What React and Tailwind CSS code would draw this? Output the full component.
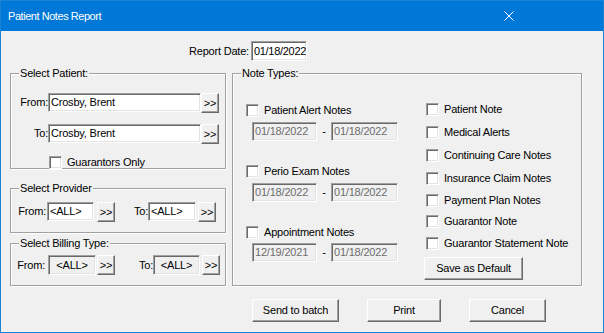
import React from "react";

// classic win32 bevels
const sunken =
  "border border-t-[#a0a0a0] border-l-[#a0a0a0] border-b-white border-r-white shadow-[inset_1px_1px_0_#696969,inset_-1px_-1px_0_#e3e3e3]";
const raised =
  "border border-t-white border-l-white border-b-[#696969] border-r-[#696969] shadow-[inset_-1px_-1px_0_#a0a0a0] bg-[#f0f0f0]";

const Btn = ({ className = "", children }) => (
  <div className={`flex items-center justify-center shrink-0 ${raised} ${className}`}>{children}</div>
);

const Field = ({ className = "", children }) => (
  <div className={`flex items-center shrink-0 overflow-hidden whitespace-nowrap ${sunken} ${className}`}>{children}</div>
);

const Check = ({ label }) => (
  <div className="flex items-center h-[13px]">
    <div className={`w-[13px] h-[13px] bg-white shrink-0 ${sunken}`} />
    <span className="ml-[5px] whitespace-nowrap">{label}</span>
  </div>
);

const Group = ({ label, className = "", children }) => (
  <div className={`relative border border-[#a0a0a0] shadow-[inset_1px_1px_0_#fff,1px_1px_0_#fff] ${className}`}>
    <span className="absolute left-[8px] top-[-7px] px-[1px] bg-[#f0f0f0] leading-[13px] whitespace-nowrap">{label}</span>
    {children}
  </div>
);

const DateRow = ({ from, to, className = "" }) => (
  <div className={`flex items-center ml-[6px] ${className}`}>
    <Field className="w-[65px] h-[19px] pl-[2px] bg-[#f0f0f0] text-[#6d6d6d]">{from}</Field>
    <span className="w-[14px] text-center">-</span>
    <Field className="w-[67px] h-[19px] pl-[2px] bg-[#f0f0f0] text-[#6d6d6d]">{to}</Field>
  </div>
);

export default function App() {
  const rightNotes = [
    ["Patient Note", "mt-0"],
    ["Medical Alerts", "mt-[10px]"],
    ["Continuing Care Notes", "mt-[10px]"],
    ["Insurance Claim Notes", "mt-[10px]"],
    ["Payment Plan Notes", "mt-[9px]"],
    ["Guarantor Note", "mt-[8px]"],
    ["Guarantor Statement Note", "mt-[9px]"],
  ];

  return (
    <div className="w-[604px] h-[333px] border border-[#1883d7] bg-[#f0f0f0] flex flex-col font-['Liberation_Sans',Arial,sans-serif] text-[11px] leading-[13px] tracking-[-0.2px] text-black overflow-hidden">
      {/* title bar */}
      <div className="h-[30px] shrink-0 bg-[#0078d7] flex items-center justify-between pl-[7px] pr-[89px]">
        <span className="text-white text-[11px] tracking-[-0.45px]">Patient Notes Report</span>
        <svg width="10" height="10" viewBox="0 0 10 10" className="shrink-0">
          <path d="M0.5 0.5 L9.5 9.5 M9.5 0.5 L0.5 9.5" stroke="#fff" strokeWidth="1" />
        </svg>
      </div>

      <div className="flex flex-col">
        {/* report date */}
        <div className="flex items-center mt-[10px] ml-[188px] h-[20px]">
          <span>Report Date:</span>
          <Field className="ml-[2px] w-[56px] h-[20px] pl-[2px] bg-white tracking-[-0.3px]">01/18/2022</Field>
        </div>

        <div className="flex items-start mt-[12px] ml-[9px]">
          {/* left column */}
          <div className="flex flex-col w-[216px]">
            <Group label="Select Patient:" className="h-[96px] pt-[19px]">
              <div className="flex items-start">
                <span className="w-[37px] h-[19px] flex items-center justify-end">From:</span>
                <Field className="w-[153px] h-[19px] pl-[2px] bg-white">Crosby, Brent</Field>
                <Btn className="w-[18px] h-[20px]">&gt;&gt;</Btn>
              </div>
              <div className="flex items-start mt-[11px]">
                <span className="w-[37px] h-[19px] flex items-center justify-end">To:</span>
                <Field className="w-[153px] h-[19px] pl-[2px] bg-white">Crosby, Brent</Field>
                <Btn className="w-[18px] h-[20px]">&gt;&gt;</Btn>
              </div>
              <div className="mt-[12px] ml-[38px]">
                <Check label="Guarantors Only" />
              </div>
            </Group>

            <Group label="Select Provider" className="h-[45px] mt-[19px] pt-[13px]">
              <div className="flex items-start">
                <span className="w-[35px] h-[19px] flex items-center justify-end">From:</span>
                <Field className="ml-[1px] w-[47px] h-[19px] pl-[2px] bg-white">&lt;ALL&gt;</Field>
                <Btn className="ml-[3px] w-[18px] h-[20px]">&gt;&gt;</Btn>
                <span className="w-[33px] h-[19px] flex items-center justify-end">To:</span>
                <Field className="w-[48px] h-[19px] pl-[2px] bg-white">&lt;ALL&gt;</Field>
                <Btn className="ml-[2px] w-[18px] h-[20px]">&gt;&gt;</Btn>
              </div>
            </Group>

            <Group label="Select Billing Type:" className="h-[43px] mt-[10px] pt-[11px]">
              <div className="flex items-start">
                <span className="w-[34px] h-[20px] flex items-center justify-end">From:</span>
                <Field className="ml-[3px] w-[48px] h-[20px] justify-center bg-[#f0f0f0]">&lt;ALL&gt;</Field>
                <Btn className="ml-[1px] w-[18px] h-[20px]">&gt;&gt;</Btn>
                <span className="w-[38px] h-[20px] flex items-center justify-end">To:</span>
                <Field className="w-[47px] h-[20px] justify-center bg-[#f0f0f0]">&lt;ALL&gt;</Field>
                <Btn className="ml-[2px] w-[18px] h-[20px]">&gt;&gt;</Btn>
              </div>
            </Group>
          </div>

          {/* note types */}
          <Group label="Note Types:" className="ml-[6px] w-[350px] h-[213px] flex">
            <div className="w-[193px] pl-[13px] pt-[30px] flex flex-col">
              <Check label="Patient Alert Notes" />
              <DateRow from="01/18/2022" to="01/18/2022" className="mt-[5px]" />
              <div className="mt-[24px]">
                <Check label="Perio Exam Notes" />
              </div>
              <DateRow from="01/18/2022" to="01/18/2022" className="mt-[5px]" />
              <div className="mt-[24px]">
                <Check label="Appointment Notes" />
              </div>
              <DateRow from="12/19/2021" to="01/18/2022" className="mt-[4px]" />
            </div>
            <div className="pt-[29px] flex flex-col">
              {rightNotes.map(([label, mt]) => (
                <div key={label} className={mt}>
                  <Check label={label} />
                </div>
              ))}
              <Btn className="mt-[7px] -ml-[2px] w-[99px] h-[23px]">Save as Default</Btn>
            </div>
          </Group>
        </div>

        {/* bottom buttons */}
        <div className="flex items-center mt-[13px] ml-[251px] gap-[28px]">
          <Btn className="w-[87px] h-[23px]">Send to batch</Btn>
          <Btn className="w-[74px] h-[23px]">Print</Btn>
          <Btn className="w-[77px] h-[23px]">Cancel</Btn>
        </div>
      </div>
    </div>
  );
}
